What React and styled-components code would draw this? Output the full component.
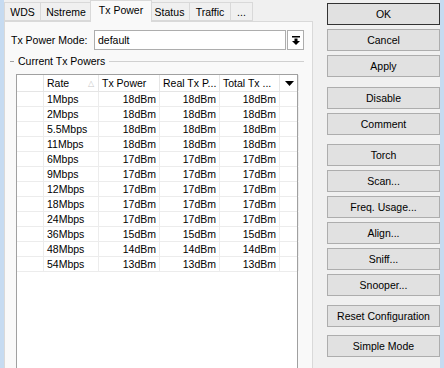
import styled, { createGlobalStyle } from "styled-components";

const Global = createGlobalStyle`
  body {
    margin: 0;
    background: #f0f0f0;
    font-family: "Liberation Sans", Arial, sans-serif;
    font-size: 10.5px;
    color: #000;
  }
`;

const Window = styled.div`
  width: 444px;
  height: 368px;
  display: flex;
  overflow: hidden;
  background: #f0f0f0;
`;

const Edge = styled.div`
  width: ${(p) => p.$w}px;
  background: #c6dbf1;
  flex-shrink: 0;
`;

const TabArea = styled.div`
  width: 309px;
  display: flex;
  flex-direction: column;
  flex-shrink: 0;
`;

const TabStrip = styled.div`
  height: 21px;
  display: flex;
  align-items: flex-end;
  position: relative;
  z-index: 1;
`;

const Tab = styled.div`
  width: ${(p) => p.$w}px;
  height: ${(p) => (p.$active ? 22 : 19)}px;
  margin: ${(p) => (p.$active ? "0 -2px -1px -2px" : "0")};
  box-sizing: border-box;
  border: 1px solid #d9d9d9;
  border-bottom: ${(p) => (p.$active ? "none" : "1px solid #d9d9d9")};
  border-left-width: ${(p) => (p.$first || p.$active ? 1 : 0)}px;
  background: ${(p) => (p.$active ? "#f9f9f9" : "#f0f0f0")};
  display: flex;
  align-items: center;
  justify-content: center;
  padding-bottom: ${(p) => (p.$active ? 3 : 0)}px;
  position: relative;
  z-index: ${(p) => (p.$active ? 2 : 1)};
  white-space: nowrap;
`;

const Panel = styled.div`
  flex: 1;
  background: #f9f9f9;
  border: 1px solid #d9d9d9;
  border-bottom: none;
  display: flex;
  flex-direction: column;
  padding: 8px 8px 0 5px;
`;

const ModeRow = styled.div`
  display: flex;
  align-items: center;
  height: 20px;
`;

const Label = styled.span`
  width: 83px;
  padding-left: 1px;
`;

const Input = styled.div`
  width: 192px;
  height: 20px;
  box-sizing: border-box;
  border: 1px solid #adadad;
  background: #fff;
  display: flex;
  align-items: center;
  padding-left: 3px;
`;

const DropButton = styled.div`
  width: 17px;
  height: 20px;
  margin-left: 1px;
  box-sizing: border-box;
  border: 1px solid #adadad;
  background: #fff;
  display: flex;
  align-items: center;
  justify-content: center;
`;

const GroupTitle = styled.div`
  display: flex;
  align-items: center;
  margin-top: 4px;
  height: 14px;
  color: #000;
  &::before {
    content: "";
    width: 4px;
    border-top: 1px solid #a0a0a0;
    margin-right: 4px;
  }
  &::after {
    content: "";
    flex: 1;
    border-top: 1px solid #d0d0d0;
    margin-left: 4px;
  }
`;

const Table = styled.div`
  margin: 6px 6px 0 6px;
  flex: 1;
  background: #fff;
  border: 1px solid #a0a0a0;
  border-bottom: none;
`;

const Row = styled.div`
  display: grid;
  grid-template-columns: 27px 55px 61px 60px 60px 19px;
  height: ${(p) => (p.$header ? 17 : 15)}px;
  box-sizing: border-box;
  border-bottom: 1px solid ${(p) => (p.$header ? "#e5e5e5" : "#ececec")};
`;

const Cell = styled.div`
  box-sizing: border-box;
  border-right: 1px solid ${(p) => (p.$header ? "#e5e5e5" : "#ececec")};
  display: flex;
  align-items: center;
  justify-content: ${(p) => (p.$right ? "flex-end" : p.$center ? "center" : "flex-start")};
  padding: ${(p) => (p.$right ? "0 3px 0 0" : p.$center ? "0" : "0 0 0 3px")};
  white-space: nowrap;
  overflow: hidden;
  position: relative;
`;

const SortMark = styled.span`
  position: absolute;
  right: 4px;
  top: 4px;
  color: #c8c8c8;
  font-size: 8px;
`;

const ButtonColumn = styled.div`
  width: 113px;
  margin-left: 14px;
  padding-top: 3px;
  display: flex;
  flex-direction: column;
  gap: 4px;
  flex-shrink: 0;
`;

const Button = styled.div`
  height: 22px;
  box-sizing: border-box;
  border: 1px solid ${(p) => (p.$default ? "#333" : "#adadad")};
  background: #e1e1e1;
  display: flex;
  align-items: center;
  justify-content: center;
  margin-top: ${(p) => p.$gap || 0}px;
`;

const Spacer = styled.div`
  flex: 1;
`;

const rows = [
  ["1Mbps", 18],
  ["2Mbps", 18],
  ["5.5Mbps", 18],
  ["11Mbps", 18],
  ["6Mbps", 17],
  ["9Mbps", 17],
  ["12Mbps", 17],
  ["18Mbps", 17],
  ["24Mbps", 17],
  ["36Mbps", 15],
  ["48Mbps", 14],
  ["54Mbps", 13],
];

const tabs = [
  ["WDS", 37],
  ["Nstreme", 51],
  ["Tx Power", 62],
  ["Status", 40],
  ["Traffic", 41],
  ["...", 22],
];

const buttons = [
  ["OK", 0, true],
  ["Cancel", 0],
  ["Apply", 0],
  ["Disable", 6],
  ["Comment", 0],
  ["Torch", 5],
  ["Scan...", 0],
  ["Freq. Usage...", 0],
  ["Align...", 0],
  ["Sniff...", 0],
  ["Snooper...", 0],
  ["Reset Configuration", 5],
  ["Simple Mode", 4],
];

export default function App() {
  return (
    <Window>
      <Global />
      <Edge $w={4} />
      <TabArea>
        <TabStrip>
          {tabs.map(([t, w], i) => (
            <Tab key={t} $w={w} $first={i === 0} $active={t === "Tx Power"}>
              {t}
            </Tab>
          ))}
        </TabStrip>
        <Panel>
          <ModeRow>
            <Label>Tx Power Mode:</Label>
            <Input>default</Input>
            <DropButton>
              <svg width="8" height="9" viewBox="0 0 8 9">
                <rect x="0" y="0" width="8" height="1.5" fill="#000" />
                <rect x="2.5" y="2.5" width="3" height="2.5" fill="#000" />
                <polygon points="0,5 8,5 4,9" fill="#000" />
              </svg>
            </DropButton>
          </ModeRow>
          <GroupTitle>Current Tx Powers</GroupTitle>
          <Table>
            <Row $header>
              <Cell $header />
              <Cell $header>
                Rate<SortMark>△</SortMark>
              </Cell>
              <Cell $header>Tx Power</Cell>
              <Cell $header>Real Tx P...</Cell>
              <Cell $header>Total Tx ...</Cell>
              <Cell $header $center>
                <svg width="9" height="5" viewBox="0 0 9 5">
                  <polygon points="0,0 9,0 4.5,5" fill="#000" />
                </svg>
              </Cell>
            </Row>
            {rows.map(([rate, p]) => (
              <Row key={rate}>
                <Cell />
                <Cell>{rate}</Cell>
                <Cell $right>{p}dBm</Cell>
                <Cell $right>{p}dBm</Cell>
                <Cell $right>{p}dBm</Cell>
                <Cell />
              </Row>
            ))}
          </Table>
        </Panel>
      </TabArea>
      <ButtonColumn>
        {buttons.map(([t, gap, def]) => (
          <Button key={t} $gap={gap} $default={def}>
            {t}
          </Button>
        ))}
      </ButtonColumn>
      <Spacer />
      <Edge $w={5} />
    </Window>
  );
}
